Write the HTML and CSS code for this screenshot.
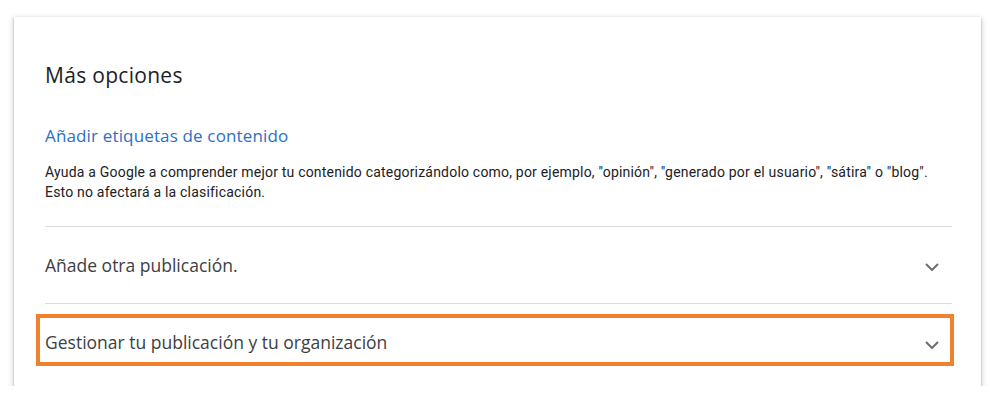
FILE: index.html
```html
<!DOCTYPE html>
<html lang="es">
<head>
<meta charset="utf-8">
<link rel="stylesheet" href="styles.css">
</head>
<body>
<div class="card">
  <h2 class="title">Más opciones</h2>
  <a class="link" href="#">Añadir etiquetas de contenido</a>
  <p class="desc">Ayuda a Google a comprender mejor tu contenido categorizándolo como, por ejemplo, "opinión", "generado por el usuario", "sátira" o "blog".<br>Esto no afectará a la clasificación.</p>
  <div class="row">
    <span class="row-label">Añade otra publicación.</span>
    <svg class="chev" width="14" height="8" viewBox="0 0 14 8"><path d="M1 1l6 6 6-6" fill="none" stroke="#6b6e72" stroke-width="2"/></svg>
  </div>
  <div class="row row-last highlight">
    <span class="row-label">Gestionar tu publicación y tu organización</span>
    <svg class="chev chev-low" width="14" height="8" viewBox="0 0 14 8"><path d="M1 1l6 6 6-6" fill="none" stroke="#6b6e72" stroke-width="2"/></svg>
  </div>
</div>
</body>
</html>
```
FILE: styles.css
```css
html, body {
  margin: 0;
  padding: 0;
  background: #ffffff;
}
body {
  font-family: Roboto, "Liberation Sans", sans-serif;
}
.card {
  margin: 17px 0 0 14px;
  width: 967px;
  height: 369px;
  box-sizing: border-box;
  padding: 0 29px 0 31px;
  background: #fff;
  box-shadow: 0 1px 2px rgba(0,0,0,0.3), 0 2px 6px 1px rgba(0,0,0,0.15);
  display: flex;
  flex-direction: column;
}
.title {
  margin: 44px 0 0 0;
  font-family: "Open Sans", Roboto, sans-serif;
  font-weight: 400;
  font-size: 21px;
  letter-spacing: 0.3px;
  line-height: 28px;
  color: #202124;
}
.link {
  margin-top: 35px;
  font-family: "Open Sans", Roboto, sans-serif;
  font-size: 17px;
  letter-spacing: 0.15px;
  line-height: 24px;
  color: #2a6fc6;
  text-decoration: none;
  align-self: flex-start;
}
.desc {
  margin: 14px 0 24px 0;
  font-size: 14px;
  letter-spacing: 0.2px;
  line-height: 20px;
  color: #202124;
}
.row {
  border-top: 1px solid #dadce0;
  height: 76px;
  flex-shrink: 0;
  display: flex;
  align-items: center;
  justify-content: space-between;
  position: relative;
}
.row-label {
  font-family: "Open Sans", Roboto, sans-serif;
  font-size: 17.5px;
  color: #3c4043;
}
.chev {
  margin-right: 13px;
  margin-top: 4px;
}
.chev-low {
  margin-top: 6px;
}
.highlight::after {
  content: "";
  position: absolute;
  left: -9px;
  right: -2px;
  top: 10px;
  height: 52px;
  box-sizing: border-box;
  border: 4px solid #f0812f;
  pointer-events: none;
}
```
